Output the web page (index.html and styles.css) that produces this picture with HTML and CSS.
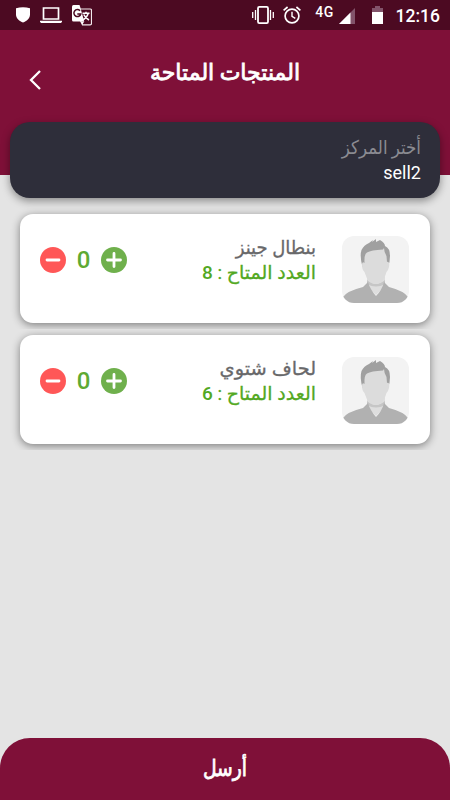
FILE: index.html
```
<!DOCTYPE html>
<html lang="ar" dir="rtl">
<head>
  <meta charset="UTF-8" />
  <title>المنتجات المتاحة</title>
  <link rel="stylesheet" href="styles.css">
</head>
<body>
  <div class="status-bar" dir="ltr">
    <div class="status-left">
      <svg width="14" height="16" viewBox="0 0 14 16"><path d="M0 1.2Q7-.6 14 1.2V7.5C14 11.5 10.5 14 7 15.6 3.500 14 0 11.500 0 7.500Z" fill="#fff"/></svg>
      <svg width="22" height="16" viewBox="0 0 22 16"><path d="M3.500 1h15v11h-15Z" fill="none" stroke="#fff" stroke-width="1.700"/><path d="M0 13.700h22v1.100l-1 1.200H1l-1-1.200Z" fill="#fff"/></svg>
      <svg class="translate-icon" width="20" height="21" viewBox="0 0 20 21">
        <path d="M8 4h10.200q1.300 0 1.300 1.300v13.200q0 1.300-1.300 1.300h-7.700l-2-4" fill="none" stroke="#f2e9ec" stroke-width="1.200"/>
        <path d="M1.500 0h6l1 3 3.700 13.500H1.500Q0 16.500 0 15V1.500Q0 0 1.500 0Z" fill="#fff"/>
        <path d="M8 5.700A3.500 3.500 0 1 0 8.800 9H5.300" fill="none" stroke="#4c0a22" stroke-width="1.500"/>
        <path d="M10.500 8.200h7M14 6.800v1.400M16.300 8.200q-.7 3.500-5.100 6.700M11.800 9.500q1 3 5.200 5.500" fill="none" stroke="#fff" stroke-width="1.500"/>
        <path d="M9 16.500h3.300l-2 3Z" fill="#fff"/>
      </svg>
    </div>
    <div class="status-right">
      <svg width="22" height="18" viewBox="0 0 22 18"><rect x="6" y=".9" width="10" height="16.200" rx="1.300" fill="none" stroke="#fff" stroke-width="1.800"/><path d="M3.500 4v10M18.500 4v10M.7 6v6M21.300 6v6" stroke="#fff" stroke-width="1.300"/></svg>
      <svg class="alarm-icon" width="18" height="18" viewBox="0 0 18 18"><circle cx="9" cy="10" r="6.900" fill="none" stroke="#fff" stroke-width="1.700"/><path d="M.6 4.300 4.600 1M17.400 4.300 13.400 1" stroke="#fff" stroke-width="1.700"/><path d="M9 5.800V10.400l3.300 2" fill="none" stroke="#fff" stroke-width="1.400"/></svg>
      <span class="network">4G</span>
      <svg class="signal-icon" width="16" height="16" viewBox="0 0 16 16"><path d="M16 0V16H0Z" fill="#82536a"/><path d="M11.500 4.500V16H0Z" fill="#fff"/></svg>
      <svg class="battery-icon" width="11" height="18" viewBox="0 0 11 18"><path d="M3 0h5v2h3v5H0V2h3Z" fill="#82536a"/><path d="M0 6h11v12H0Z" fill="#fff"/></svg>
      <span class="clock">12:16</span>
    </div>
  </div>

  <header class="header">
    <h1>المنتجات المتاحة</h1>
    <svg class="back" width="12" height="20" viewBox="0 0 12 20"><path d="M11 1 2 10l9 9" fill="none" stroke="#fff" stroke-width="2.300"/></svg>
  </header>

  <section class="center-select">
    <div class="select-label">أختر المركز</div>
    <div class="select-value">sell2</div>
  </section>

  <main class="products">
    <div class="product-row">
      <div class="product">
        <svg class="avatar" width="67" height="67" viewBox="0 0 67 67">
          <rect width="67" height="67" fill="#f3f3f3"/>
          <path d="M25 38h18v12l-9 9-9-9Z" fill="#dedede"/>
          <path d="M25 44q9 8 18 0v4q-9 5-18 0Z" fill="#c6c6c6"/>
          <path d="M1 61Q5 55 21 51L26 46Q28 53 34 60 40 54 42 46L47 51Q62 55 66 61V67H1Z" fill="#b1b1b1"/>
          <path d="M20.500 31Q17.500 20 19.500 14 22 9 27 7L31 4 30 6 34 3 34 6 38 4Q43 7 43 10 48 12 48 20 48 26 46 31L40 24H26Z" fill="#a0a0a0"/>
          <path d="M22.500 27Q22 18 25 16.500 29 14 41 13.500L42 12Q42 16 44.500 20L45 26Q48 25 47 31 46 35 44.500 36 42 44 39 46 34 50 28 46 24 42 22.500 36 20 34 20 29 20 25 22.500 27Z" fill="#dcdcdc"/>
        </svg>
        <div class="product-info">
          <div class="product-name">بنطال جينز</div>
          <div class="product-stock">العدد المتاح : <span class="stock-number">8</span></div>
        </div>
        <div class="counter">
          <svg width="26" height="26" viewBox="0 0 26 26"><circle cx="13" cy="13" r="13" fill="#6fb04c"/><path d="M13 6.500v13M6.500 13h13" stroke="#fff" stroke-width="2.800" stroke-linecap="round"/></svg>
          <span class="count">0</span>
          <svg width="26" height="26" viewBox="0 0 26 26"><circle cx="13" cy="13" r="13" fill="#ff5757"/><path d="M7 13h12" stroke="#fff" stroke-width="2.800" stroke-linecap="round"/></svg>
        </div>
      </div>
    </div>

    <div class="product-row">
      <div class="product">
        <svg class="avatar" width="67" height="67" viewBox="0 0 67 67">
          <rect width="67" height="67" fill="#f3f3f3"/>
          <path d="M25 38h18v12l-9 9-9-9Z" fill="#dedede"/>
          <path d="M25 44q9 8 18 0v4q-9 5-18 0Z" fill="#c6c6c6"/>
          <path d="M1 61Q5 55 21 51L26 46Q28 53 34 60 40 54 42 46L47 51Q62 55 66 61V67H1Z" fill="#b1b1b1"/>
          <path d="M20.500 31Q17.500 20 19.500 14 22 9 27 7L31 4 30 6 34 3 34 6 38 4Q43 7 43 10 48 12 48 20 48 26 46 31L40 24H26Z" fill="#a0a0a0"/>
          <path d="M22.500 27Q22 18 25 16.500 29 14 41 13.500L42 12Q42 16 44.500 20L45 26Q48 25 47 31 46 35 44.500 36 42 44 39 46 34 50 28 46 24 42 22.500 36 20 34 20 29 20 25 22.500 27Z" fill="#dcdcdc"/>
        </svg>
        <div class="product-info">
          <div class="product-name name-wide">لحاف شتوي</div>
          <div class="product-stock">العدد المتاح : <span class="stock-number">6</span></div>
        </div>
        <div class="counter">
          <svg width="26" height="26" viewBox="0 0 26 26"><circle cx="13" cy="13" r="13" fill="#6fb04c"/><path d="M13 6.500v13M6.500 13h13" stroke="#fff" stroke-width="2.800" stroke-linecap="round"/></svg>
          <span class="count">0</span>
          <svg width="26" height="26" viewBox="0 0 26 26"><circle cx="13" cy="13" r="13" fill="#ff5757"/><path d="M7 13h12" stroke="#fff" stroke-width="2.800" stroke-linecap="round"/></svg>
        </div>
      </div>
    </div>
  </main>

  <footer class="send-button"><span>أرسل</span></footer>
</body>
</html>
```
FILE: styles.css
```
* {
  box-sizing: border-box;
}

body {
  margin: 0;
  height: 800px;
  display: flex;
  flex-direction: column;
  overflow: hidden;
  background-color: #e4e4e4;
  font-family: Roboto, "DejaVu Sans", sans-serif;
}

svg {
  display: block;
  flex-shrink: 0;
}

.status-bar {
  height: 30px;
  flex-shrink: 0;
  display: flex;
  justify-content: space-between;
  padding: 0 10px 0 16px;
  background-color: #4c0a22;
  color: white;
}

.status-left {
  display: flex;
  align-items: center;
  gap: 10px;
}

.status-left .translate-icon {
  margin-top: 1px;
}

.status-right {
  display: flex;
  align-items: center;
}

.alarm-icon {
  margin-left: 9px;
}

.network {
  margin: 0 5px 7px 14px;
  font-size: 14px;
  line-height: 16px;
  font-weight: 500;
  letter-spacing: 0.4px;
}

.signal-icon {
  margin-top: 2px;
}

.battery-icon {
  margin: 0 13px 0 17px;
}

.clock {
  font-size: 17.500px;
  line-height: 20px;
  font-weight: 500;
  margin-top: 2px;
}

.header {
  height: 145px;
  flex-shrink: 0;
  display: grid;
  grid-template-columns: 1fr auto 1fr;
  align-items: start;
  padding: 28px 29px 0;
  background-color: #7f1038;
  color: white;
}

.header h1 {
  grid-column: 2;
  margin: 0;
  font-size: 22px;
  line-height: 30px;
  font-weight: normal;
  -webkit-text-stroke: 0.8px white;
}

.back {
  justify-self: end;
  margin-top: 12px;
}

.center-select {
  height: 76px;
  flex-shrink: 0;
  margin: -53px 10px 0;
  padding: 13px 19px 0 20px;
  border-radius: 20px;
  background-color: #2e2e3a;
  box-shadow: 0 3px 9px rgba(0,0,0,0.4);
  color: white;
}

.select-label {
  font-size: 19px;
  line-height: 25px;
  color: #8b8b92;
  transform: scaleX(0.88);
  transform-origin: right;
}

.select-value {
  font-size: 18px;
  line-height: 25px;
}

.products {
  flex: 1;
  padding-top: 10px;
}

.product-row {
  height: 121px;
  padding: 6px 20px;
  overflow: hidden;
}

.product {
  display: flex;
  align-items: flex-start;
  height: 109px;
  padding: 22px 21px 0 20px;
  border-radius: 13px;
  background-color: white;
  box-shadow: 0 2px 9px rgba(0,0,0,0.45);
}

.avatar {
  border-radius: 12px;
}

.product-info {
  margin-right: 26px;
  white-space: nowrap;
}

.product-name {
  font-size: 19px;
  line-height: 24px;
  color: #68686a;
  -webkit-text-stroke: 0.3px #68686a;
  transform: scaleX(0.95);
  transform-origin: right;
}

.product-name.name-wide {
  transform: scaleX(1.02);
}

.product-stock {
  font-size: 19px;
  line-height: 26px;
  color: #52a822;
  -webkit-text-stroke: 0.3px #52a822;
}

.stock-number {
  font-weight: 500;
  -webkit-text-stroke: 0;
}

.counter {
  display: flex;
  align-items: center;
  margin: 11px auto 0 0;
}

.count {
  width: 35px;
  text-align: center;
  font-size: 24px;
  line-height: 26px;
  font-weight: 500;
  color: #5eaa33;
}

.send-button {
  height: 62px;
  flex-shrink: 0;
  border-radius: 30px 30px 0 0;
  background-color: #7f1038;
  color: white;
  font-size: 22px;
  line-height: 62px;
  text-align: center;
  -webkit-text-stroke: 0.8px white;
}

.send-button span {
  display: inline-block;
  transform: scaleX(0.85);
}
```
